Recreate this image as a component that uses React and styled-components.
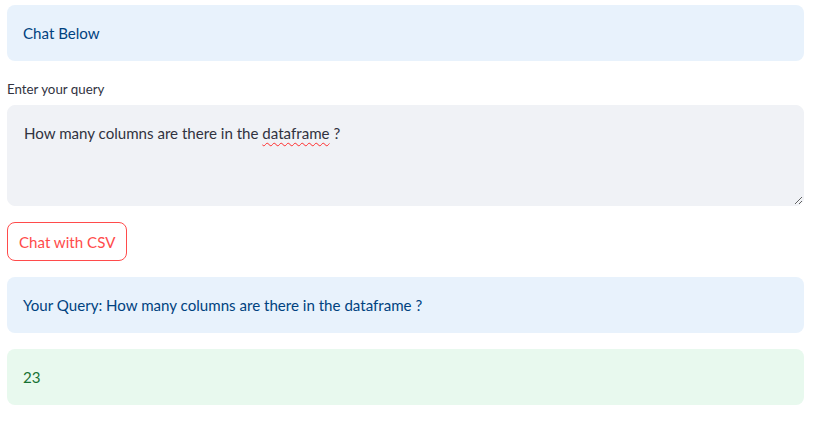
import React from 'react';
import styled, { createGlobalStyle } from 'styled-components';

const GlobalStyle = createGlobalStyle`
  body {
    margin: 0;
    background: #ffffff;
    font-family: Lato, "Noto Sans", sans-serif;
    color: #31333f;
  }
`;

const Page = styled.div`
  display: flex;
  flex-direction: column;
  gap: 16px;
  padding: 5px 15px 0 7px;
`;

const tones = {
  info: { bg: '#e8f2fc', fg: '#004280' },
  success: { bg: '#e8f9ee', fg: '#177233' },
};

const Alert = styled.div`
  background: ${p => tones[p.$tone].bg};
  color: ${p => tones[p.$tone].fg};
  border-radius: 8px;
  padding: 16px;
  font-size: 15.1px;
  line-height: 24px;
  min-height: 24px;
`;

const Field = styled.div`
  display: flex;
  flex-direction: column;
`;

const Label = styled.label`
  font-size: 13.3px;
  line-height: 20px;
  height: 28px;
  box-sizing: border-box;
  padding-top: 2px;
  color: #31333f;
`;

const TextArea = styled.div`
  background: #f0f2f6;
  border: 1px solid #f0f2f6;
  border-radius: 8px;
  height: 101px;
  padding: 15px 16px 16px;
  box-sizing: border-box;
  font-size: 15.1px;
  line-height: 25px;
  color: #31333f;
  resize: vertical;
  overflow: auto;
`;

const Misspelled = styled.span`
  text-decoration: underline wavy #ff2b2b;
  text-decoration-thickness: 1px;
  text-underline-offset: 3px;
`;

const Button = styled.button`
  align-self: flex-start;
  background: #ffffff;
  border: 1px solid #ff4b4b;
  color: #ff4b4b;
  border-radius: 8px;
  padding: 0 11px;
  height: 39px;
  font-family: inherit;
  font-size: 15.1px;
  cursor: pointer;
`;

export default function App() {
  return (
    <>
      <GlobalStyle />
      <Page>
        <Alert $tone="info">Chat Below</Alert>
        <Field>
          <Label>Enter your query</Label>
          <TextArea role="textbox">
            How many columns are there in the <Misspelled>dataframe</Misspelled> ?
          </TextArea>
        </Field>
        <Button>Chat with CSV</Button>
        <Alert $tone="info">Your Query: How many columns are there in the dataframe ?</Alert>
        <Alert $tone="success">23</Alert>
      </Page>
    </>
  );
}
